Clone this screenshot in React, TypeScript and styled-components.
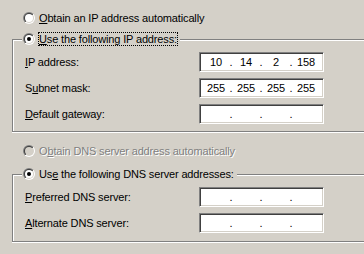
import React, { useId } from "react";
import styled, { createGlobalStyle } from "styled-components";

const Global = createGlobalStyle`
  html, body {
    margin: 0;
    padding: 0;
    background: #d4d0c8;
    overflow: hidden;
  }
  body {
    font-family: "Liberation Sans", Arial, sans-serif;
    font-size: 11px;
    letter-spacing: -0.15px;
    color: #000;
  }
`;

const Page = styled.div`
  width: 364px;
  height: 254px;
  padding: 11px 0 0 12px;
  box-sizing: border-box;
  display: flex;
  flex-direction: column;
`;

const OptionRow = styled.div<{ $top?: number }>`
  display: flex;
  align-items: center;
  height: 14px;
  margin-top: ${(p) => p.$top ?? 0}px;
  padding-left: 11px;
  gap: 3px;
`;

const OptionText = styled.span<{ $focus?: boolean; $disabled?: boolean }>`
  display: inline-block;
  line-height: 12px;
  white-space: nowrap;
  border: 1px dotted ${(p) => (p.$focus ? "#000" : "transparent")};
  color: ${(p) => (p.$disabled ? "#808080" : "#000")};
  text-shadow: ${(p) => (p.$disabled ? "1px 1px 0 #fff" : "none")};
`;

const Group = styled.fieldset<{ $top: number; $bottom: number }>`
  margin: ${(p) => p.$top}px 0 0 0;
  padding: 6px 0 ${(p) => p.$bottom}px 12px;
  border: 1px solid #808080;
  border-right: 0;
  box-shadow: inset 1px 1px 0 #fff, 0 1px 0 #fff;
  min-width: 0;
`;

const Legend = styled.legend`
  display: flex;
  align-items: center;
  gap: 3px;
  margin-left: -3px;
  padding: 0 2px 0 1px;
  background: #d4d0c8;
`;

const Rows = styled.div`
  display: flex;
  flex-direction: column;
  gap: 6px;
`;

const FieldRow = styled.div`
  display: grid;
  grid-template-columns: 174px 125px;
  align-items: center;
  height: 20px;
`;

const FieldLabel = styled.span`
  white-space: nowrap;
`;

const IpBox = styled.div`
  box-sizing: border-box;
  width: 125px;
  height: 20px;
  background: #fff;
  border: 1px solid;
  border-color: #808080 #fff #fff #808080;
  box-shadow: inset 1px 1px 0 #404040, inset -1px -1px 0 #d4d0c8;
  display: flex;
  align-items: center;
  padding: 0 0 0 3px;
`;

const Octet = styled.span`
  width: 26px;
  text-align: center;
  line-height: 12px;
`;

const Dot = styled.span`
  width: 4px;
  text-align: center;
  line-height: 12px;
`;

const Key = styled.span`
  text-decoration: underline;
`;

function Radio({ checked, disabled }: { checked?: boolean; disabled?: boolean }) {
  const id = useId().replace(/[^a-zA-Z0-9]/g, "");
  return (
    <svg width="12" height="12" viewBox="0 0 12 12" style={{ flex: "none" }}>
      <defs>
        <linearGradient id={`o${id}`} x1="0" y1="0" x2="1" y2="1">
          <stop offset="0.5" stopColor="#808080" />
          <stop offset="0.5" stopColor="#ffffff" />
        </linearGradient>
        <linearGradient id={`i${id}`} x1="0" y1="0" x2="1" y2="1">
          <stop offset="0.5" stopColor="#404040" />
          <stop offset="0.5" stopColor="#d4d0c8" />
        </linearGradient>
      </defs>
      <circle cx="6" cy="6" r="6" fill={`url(#o${id})`} />
      <circle cx="6" cy="6" r="5" fill={`url(#i${id})`} />
      <circle cx="6" cy="6" r="4" fill={disabled ? "#d4d0c8" : "#fff"} />
      {checked && <circle cx="6" cy="6" r="2" fill="#000" />}
    </svg>
  );
}

function IpField({ value }: { value?: string[] }) {
  const parts = value ?? ["", "", "", ""];
  return (
    <IpBox>
      <Octet>{parts[0]}</Octet>
      <Dot>.</Dot>
      <Octet>{parts[1]}</Octet>
      <Dot>.</Dot>
      <Octet>{parts[2]}</Octet>
      <Dot>.</Dot>
      <Octet>{parts[3]}</Octet>
    </IpBox>
  );
}

export default function App() {
  return (
    <>
      <Global />
      <Page>
        <OptionRow>
          <Radio />
          <OptionText>
            <Key>O</Key>btain an IP address automatically
          </OptionText>
        </OptionRow>
        <Group $top={7} $bottom={7}>
          <Legend>
            <Radio checked />
            <OptionText $focus>
              <Key>U</Key>se the following IP address:
            </OptionText>
          </Legend>
          <Rows>
            <FieldRow>
              <FieldLabel>
                <Key>I</Key>P address:
              </FieldLabel>
              <IpField value={["10", "14", "2", "158"]} />
            </FieldRow>
            <FieldRow>
              <FieldLabel>
                S<Key>u</Key>bnet mask:
              </FieldLabel>
              <IpField value={["255", "255", "255", "255"]} />
            </FieldRow>
            <FieldRow>
              <FieldLabel>
                <Key>D</Key>efault gateway:
              </FieldLabel>
              <IpField />
            </FieldRow>
          </Rows>
        </Group>
        <OptionRow $top={12}>
          <Radio disabled />
          <OptionText $disabled>
            O<Key>b</Key>tain DNS server address automatically
          </OptionText>
        </OptionRow>
        <Group $top={9} $bottom={8}>
          <Legend>
            <Radio checked />
            <OptionText>
              Us<Key>e</Key> the following DNS server addresses:
            </OptionText>
          </Legend>
          <Rows>
            <FieldRow>
              <FieldLabel>
                <Key>P</Key>referred DNS server:
              </FieldLabel>
              <IpField />
            </FieldRow>
            <FieldRow>
              <FieldLabel>
                <Key>A</Key>lternate DNS server:
              </FieldLabel>
              <IpField />
            </FieldRow>
          </Rows>
        </Group>
      </Page>
    </>
  );
}
